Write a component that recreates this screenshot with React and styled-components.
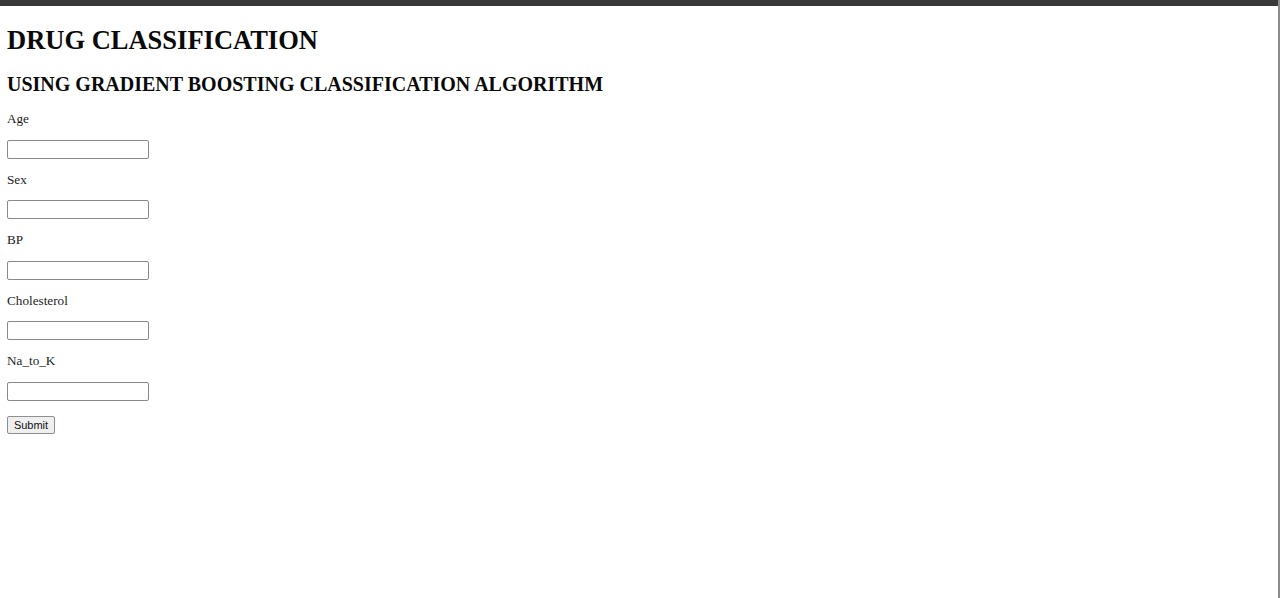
import React from "react";
import styled, { createGlobalStyle } from "styled-components";

const Global = createGlobalStyle`
  html, body { margin: 0; padding: 0; background: #ffffff; }
  body { font-family: "Liberation Serif", "Times New Roman", serif; color: #111; }
`;

const Page = styled.div`
  height: 598px;
  box-sizing: border-box;
  border-right: 2px solid #8c8c8c;
  display: flex;
  flex-direction: column;
  overflow: hidden;
`;

const TopBar = styled.div`
  height: 6px;
  background: #383838;
  flex: none;
`;

const Content = styled.main`
  padding: 0 7px;
  display: flex;
  flex-direction: column;
  align-items: flex-start;
`;

const Title = styled.h1`
  margin: 19px 0 0;
  font-size: 26.5px;
  line-height: 30px;
  font-weight: bold;
  color: #0a0a0a;
`;

const Subtitle = styled.h2`
  margin: 18px 0 0;
  font-size: 20px;
  line-height: 22px;
  font-weight: bold;
  color: #0a0a0a;
`;

const Form = styled.form`
  display: flex;
  flex-direction: column;
  align-items: flex-start;
  margin-top: 3px;
`;

const Label = styled.label`
  display: block;
  margin-top: 13px;
  font-size: 13.2px;
  line-height: 15px;
  color: #222;
`;

const Input = styled.input`
  margin: 13.5px 0 0;
  width: 142px;
  height: 19px;
  box-sizing: border-box;
  border: 1px solid #8a8a8a;
  border-radius: 2px;
  padding: 1px 2px;
  background: #fff;
  font-size: 11px;
`;

const Button = styled.button`
  margin-top: 15.5px;
  width: 48px;
  height: 18px;
  box-sizing: border-box;
  padding: 0;
  font-family: "Liberation Sans", Arial, sans-serif;
  font-size: 11px;
  color: #111;
  background: #efefef;
  border: 1px solid #8f8f8f;
  border-radius: 2px;
`;

const fields = ["Age", "Sex", "BP", "Cholesterol", "Na_to_K"];

export default function App() {
  return (
    <>
      <Global />
      <Page>
        <TopBar />
        <Content>
          <Title>DRUG CLASSIFICATION</Title>
          <Subtitle>USING GRADIENT BOOSTING CLASSIFICATION ALGORITHM</Subtitle>
          <Form onSubmit={(e) => e.preventDefault()}>
            {fields.map((f) => (
              <React.Fragment key={f}>
                <Label htmlFor={f}>{f}</Label>
                <Input id={f} name={f} type="text" />
              </React.Fragment>
            ))}
            <Button type="submit">Submit</Button>
          </Form>
        </Content>
      </Page>
    </>
  );
}
